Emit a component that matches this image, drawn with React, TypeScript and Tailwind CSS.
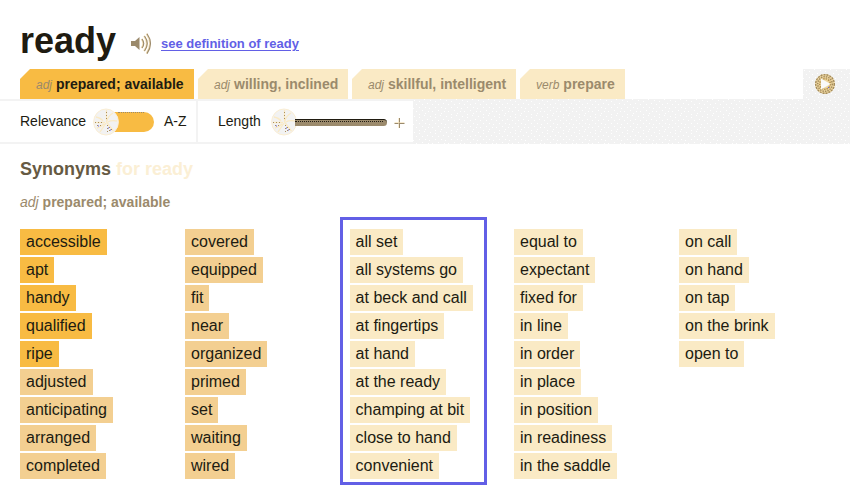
const columns: { words: string[]; strong: number; tone: string }[] = [
  {
    words: ['accessible', 'apt', 'handy', 'qualified', 'ripe', 'adjusted', 'anticipating', 'arranged', 'completed'],
    strong: 5,
    tone: 'bg-[#f3cf91]',
  },
  {
    words: ['covered', 'equipped', 'fit', 'near', 'organized', 'primed', 'set', 'waiting', 'wired'],
    strong: 0,
    tone: 'bg-[#f3cf91]',
  },
  {
    words: ['all set', 'all systems go', 'at beck and call', 'at fingertips', 'at hand', 'at the ready', 'champing at bit', 'close to hand', 'convenient'],
    strong: 0,
    tone: 'bg-[#faeac5]',
  },
  {
    words: ['equal to', 'expectant', 'fixed for', 'in line', 'in order', 'in place', 'in position', 'in readiness', 'in the saddle'],
    strong: 0,
    tone: 'bg-[#faeac5]',
  },
  {
    words: ['on call', 'on hand', 'on tap', 'on the brink', 'open to'],
    strong: 0,
    tone: 'bg-[#faeac5]',
  },
];

const tabs = [
  { kind: 'adj', label: 'prepared; available', width: 'w-[174px]', active: true },
  { kind: 'adj', label: 'willing, inclined', width: 'w-[150px]', active: false },
  { kind: 'adj', label: 'skillful, intelligent', width: 'w-[164px]', active: false },
  { kind: 'verb', label: 'prepare', width: 'w-[105px]', active: false },
];

function Knob() {
  return (
    <svg width="26" height="28" viewBox="0 0 26 28" className="block" fill="none">
      <ellipse cx="13" cy="14" rx="12.4" ry="13" fill="#f2f2f2" stroke="#fbeed3" />
      <path d="M13.500 2v12M2 14.500h10M13.500 14l7 9M13 15l-6 9M3 9q5 1 7 4M20 5q-5 3-6 8M4 20q4-1 7-4M24 13q-6-1-9 1" stroke="#faeac5" strokeWidth="1.3" />
      <path d="M13.500 4v9M2 14.500h9M4 17.500h5M14.500 17v8M16.500 19v5M18.500 21v3" stroke="#ab8f5c" strokeDasharray="1 2" />
      <path d="M15 20h1M17 22h1M5 18h1" stroke="#625fe6" />
    </svg>
  );
}

function Speaker() {
  return (
    <svg width="22" height="22" viewBox="0 0 22 22" fill="none" className="block">
      <path d="M1 8h4l4.500-4v13L5 13H1z" fill="#9b8a6c" />
      <path d="M11.500 6q3.500 4.500 0 9M14 3q5.500 7.500 0 15M16.500 .8q7 9.700 0 19.800" stroke="#f3dfb6" strokeWidth="1.8" />
      <path d="M12 6q3.500 4.500 0 9M14.500 3q5.500 7.500 0 15M17 .8q7 9.700 0 19.800" stroke="#9b8a6c" strokeWidth="1.1" />
    </svg>
  );
}

function DotTexture({ id }: { id: string }) {
  return (
    <svg className="block h-full w-full">
      <defs>
        <pattern id={id} width="16" height="16" patternUnits="userSpaceOnUse">
          <path
            fill="#fff"
            d="M1 1h1v1h-1zM6 2h1v1h-1zM11 0h1v1h-1zM14 4h1v1h-1zM3 5h1v1h-1zM9 5h1v1h-1zM0 9h1v1h-1zM6 8h1v1h-1zM12 8h1v1h-1zM3 12h1v1h-1zM9 11h1v1h-1zM15 12h1v1h-1zM6 15h1v1h-1zM12 14h1v1h-1z"
          />
        </pattern>
      </defs>
      <rect width="100%" height="100%" fill={`url(#${id})`} />
    </svg>
  );
}

function Header() {
  return (
    <header className="flex h-[69px] pl-5">
      <h1 className="mt-[20px] w-[110px] text-[36px] leading-[42px] font-bold text-[#201b11]">ready</h1>
      <div className="mt-[33px]">
        <Speaker />
      </div>
      <a href="#" className="mt-[36px] ml-[9px] text-[13px] leading-[16px] font-bold text-[#625fe6] underline decoration-1 underline-offset-2">
        see definition of ready
      </a>
    </header>
  );
}

function Tabs() {
  return (
    <nav className="flex h-[30px] gap-1 pl-5">
      {tabs.map((t) => (
        <div
          key={t.label}
          className={`flex items-baseline pt-[6px] pl-4 leading-[18px] whitespace-nowrap [clip-path:polygon(10px_0,100%_0,100%_100%,0_100%,0_10px)] ${t.width} ${
            t.active ? 'bg-[#f8bb43] text-[#201b11]' : 'bg-[#faeac5] text-[#9b8a6c]'
          }`}
        >
          <i className="text-[12px] text-[#9b8a6c]">{t.kind}</i>
          <b className="ml-1 text-[14px]">{t.label}</b>
        </div>
      ))}
      <div className="relative ml-auto w-[47px] bg-[#f2f2f2]">
        <DotTexture id="dotsCorner" />
        <svg className="absolute top-[4px] left-[11px]" width="22" height="22" viewBox="0 0 22 22" fill="none">
          <circle cx="11" cy="11" r="10" fill="#eed6a0" />
          <circle cx="11" cy="11" r="9.300" stroke="#a38b5c" strokeWidth="1.4" strokeDasharray="2 1" />
          <circle cx="11" cy="11" r="7.300" stroke="#a38b5c" strokeWidth="1.500" strokeDasharray="1.500 1" />
          <circle cx="11" cy="11" r="5.300" stroke="#b3914e" strokeWidth="1.500" strokeDasharray="1.500 1" />
          <path d="M7 5.500v11l9.500-5.500z" fill="#fafafa" />
          <path d="M14 14.500h1" stroke="#625fe6" />
        </svg>
      </div>
    </nav>
  );
}

function Filters() {
  return (
    <div className="flex h-[45px] text-[14px] leading-[16px] text-[#201b11]">
      <div className="flex w-[198px] border-y-2 border-r-2 border-[#f3f3f3] pl-5">
        <span className="mt-[12px] w-[72px]">Relevance</span>
        <div className="relative mt-[11px] ml-[6px] h-5 w-[56px] rounded-full bg-[#f8bb43]">
          <div className="absolute top-0 right-[10px] left-[20px] border-t border-dotted border-[#9b8a6c]" />
          <div className="absolute -top-[4px] -left-[5px]">
            <Knob />
          </div>
        </div>
        <span className="mt-[12px] ml-[10px]">A-Z</span>
      </div>
      <div className="flex w-[215px] border-y-2 border-[#f3f3f3] pl-5">
        <span className="mt-[12px] w-[53px]">Length</span>
        <div className="mt-[7px]">
          <Knob />
        </div>
        <div className="mt-[18px] -ml-[2px] h-[7px] w-[92px] rounded-r-full border-t border-[#201b11] bg-[#9b8a6c]">
          <div className="mt-px mr-1 border-t border-dotted border-[#201b11]" />
        </div>
        <svg className="mt-[16px] ml-[6px]" width="12" height="12" viewBox="0 0 12 12" stroke="#9b8a6c">
          <path d="M6.500 1v10M1.500 6.500h10" />
          <path d="M5.500 1v10M1.500 5.500h10" stroke="#f3dfb6" strokeOpacity=".6" />
        </svg>
      </div>
      <div className="flex-1 bg-[#f2f2f2]">
        <DotTexture id="dotsBar" />
      </div>
    </div>
  );
}

export default function App() {
  return (
    <div className="h-[496px] w-[850px] overflow-hidden bg-white font-['Liberation_Sans',Arial,sans-serif]">
      <Header />
      <Tabs />
      <Filters />
      <main className="pl-5">
        <h2 className="pt-[14px] text-[18px] leading-[22px] font-bold text-[#665a43]">
          Synonyms <span className="text-[#fbefd5]">for ready</span>
        </h2>
        <p className="mt-[14px] text-[14px] leading-[16px] text-[#9b8a6c]">
          <i>adj</i> <b>prepared; available</b>
        </p>
        <div className="mt-[19px] grid grid-cols-[165px_164.6px_164.4px_165px_165px]">
          {columns.map((col, c) => (
            <ul key={c} className="relative flex flex-col items-start gap-0.5">
              {col.words.map((word, i) => (
                <li
                  key={word}
                  className={`h-[26px] px-1.5 text-[16px] leading-[26px] whitespace-nowrap text-[#201b11] ${
                    i < col.strong ? 'bg-[#f8bb43]' : col.tone
                  }`}
                >
                  {word}
                </li>
              ))}
              {c === 2 && <div className="absolute -top-[12px] -left-[10px] h-[268px] w-[147px] border-3 border-[#625fe6]" />}
            </ul>
          ))}
        </div>
      </main>
    </div>
  );
}
